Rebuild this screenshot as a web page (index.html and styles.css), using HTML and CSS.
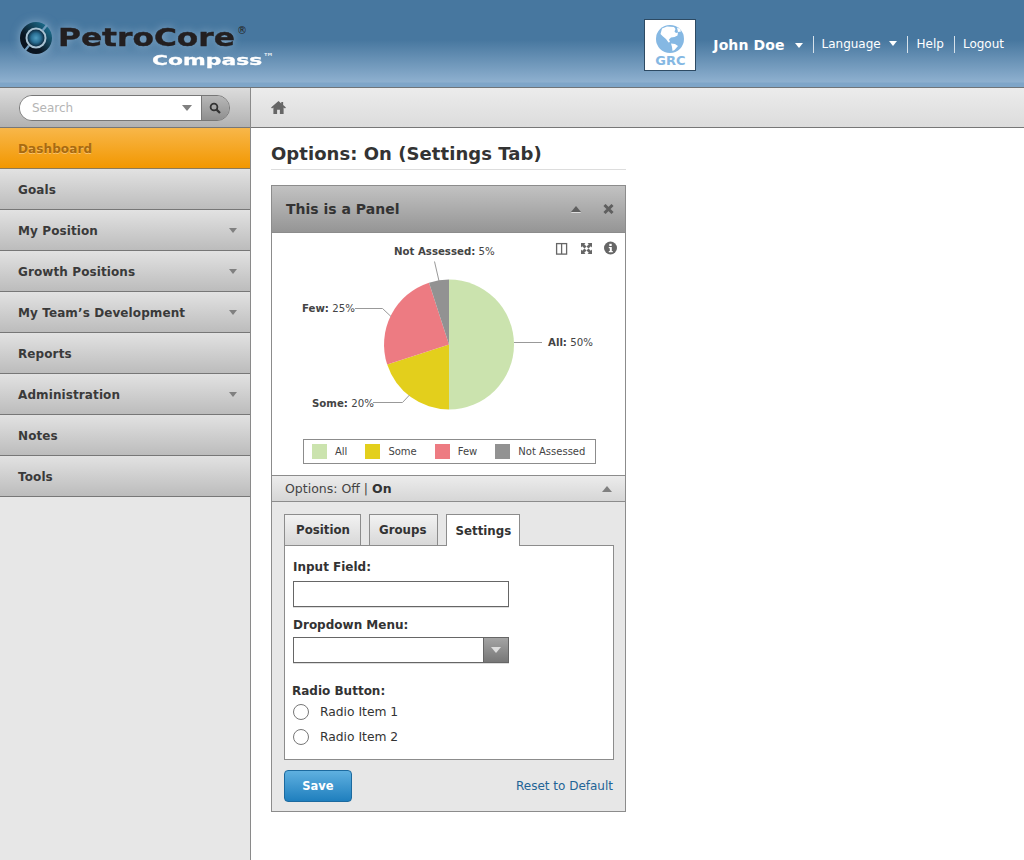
FILE: index.html
```html
<!DOCTYPE html>
<html>
<head>
    <meta charset="UTF-8">
    <meta name="viewport" content="width=device-width, initial-scale=1.0">
    <title>PetroCore Compass</title>
    <link rel="stylesheet" href="styles.css">
</head>
<body>
    <!-- Top banner -->
    <header class="banner">
        <div class="logo">
            <svg class="logo-mark" width="34" height="34" viewBox="0 0 34 34">
                <defs>
                    <linearGradient id="ringFill" x1="0" y1="1" x2="1" y2="0">
                        <stop offset="0.35" stop-color="#0a1420"/>
                        <stop offset="1" stop-color="#1f83a8"/>
                    </linearGradient>
                    <radialGradient id="coreFill">
                        <stop offset="0" stop-color="#4f9cc0"/>
                        <stop offset="0.55" stop-color="#2a6f94"/>
                        <stop offset="1" stop-color="#0c2a40"/>
                    </radialGradient>
                </defs>
                <circle cx="17" cy="17" r="16" fill="url(#ringFill)"/>
                <circle cx="17" cy="17" r="10.5" fill="#a9c2d3"/>
                <circle cx="17" cy="17" r="8.5" fill="url(#coreFill)"/>
                <path d="M23.500 9.500L28 4M10 24.500L6 29.500" stroke="#6f9abb" stroke-width="2.200"/>
            </svg>
            <div class="logo-words">
                <div class="logo-name"><span class="logo-word">PetroCore</span><span class="logo-reg">®</span></div>
                <div class="logo-sub"><span class="logo-word-sub">Compass</span><span class="logo-tm">™</span></div>
            </div>
        </div>
        <div class="user-area">
            <div class="grc-badge">
                <svg width="28" height="28" viewBox="0 0 28 28">
                    <circle cx="14" cy="14" r="14" fill="#85b8e3"/>
                    <path d="M6 3.500L11 1.500 18 2l1.500 2-1 2.500 1.500 1.500 2-.5-.5 3-3 1.500-3.500.5-2 2 1 2.500-1.500.5-2.500-3.500-3-2.500L4.500 9z" fill="#fff"/>
                    <path d="M15 18.500l4 .5 3 2-3.500 4-2 1-.5-4z" fill="#fff"/>
                    <path d="M21 2.500l3 1.500 1 2.500-3 .5z" fill="#fff"/>
                </svg>
                <span class="grc-text">GRC</span>
            </div>
            <nav class="user-links">
                <a class="user-name">John Doe <i class="caret-white"></i></a>
                <a class="user-link user-lang">Language <i class="caret-white"></i></a>
                <a class="user-link user-help">Help</a>
                <a class="user-link">Logout</a>
            </nav>
        </div>
    </header>

    <div class="page">
        <!-- Left navigation -->
        <aside class="sidebar">
            <div class="search-bar">
                <div class="search-box">
                    <div class="search-input">
                        <span>Search</span>
                        <i class="caret-grey"></i>
                    </div>
                    <div class="search-btn">
                        <svg width="12" height="12" viewBox="0 0 12 12">
                            <circle cx="5" cy="5" r="3.4" fill="none" stroke="#333" stroke-width="1.8"/>
                            <path d="M7.600 7.600L11 11" stroke="#333" stroke-width="2.200"/>
                        </svg>
                    </div>
                </div>
            </div>
            <a class="nav-item nav-active">Dashboard</a>
            <a class="nav-item">Goals</a>
            <a class="nav-item">My Position<i class="caret-grey"></i></a>
            <a class="nav-item">Growth Positions<i class="caret-grey"></i></a>
            <a class="nav-item">My Team’s Development<i class="caret-grey"></i></a>
            <a class="nav-item">Reports</a>
            <a class="nav-item">Administration<i class="caret-grey"></i></a>
            <a class="nav-item">Notes</a>
            <a class="nav-item">Tools</a>
        </aside>

        <main class="content">
            <div class="breadcrumb">
                <svg width="15" height="13" viewBox="0 0 16 14">
                    <path d="M8 0L0 7l1 1.200L2.500 7v7h4V9.500h3V14h4V7L15 8.200 16 7l-3-2.600V1h-2v1.700z" fill="#666"/>
                </svg>
            </div>
            <div class="content-body">
                <h1 class="page-title">Options: On (Settings Tab)</h1>

                <section class="panel">
                    <div class="panel-head">
                        <span>This is a Panel</span>
                        <div class="panel-tools">
                            <i class="caret-up caret-head"></i>
                            <svg width="11" height="10" viewBox="0 0 11 10">
                                <path d="M1.500 1l8 8M9.500 1l-8 8" stroke="#5f5f5f" stroke-width="3"/>
                            </svg>
                        </div>
                    </div>

                    <div class="chart-area">
                        <svg class="pie" width="353" height="200" viewBox="272 233 353 200">
                            <path d="M449 279.500A65 65 0 0 1 449 409.500Z" fill="#cbe3ae"/>
                            <path d="M449 344.500L449 409.500A65 65 0 0 1 387.200 364.600Z" fill="#e3cf1c"/>
                            <path d="M449 344.500L387.200 364.600A65 65 0 0 1 429 282.700Z" fill="#ed7b82"/>
                            <path d="M449 344.500L429 282.700A65 65 0 0 1 449 279.500Z" fill="#929292"/>
                            <g class="leaders">
                                <path d="M434.500 261.500L439 281"/>
                                <path d="M355 308.500H382.500L391 316.500"/>
                                <path d="M514 342.500H542"/>
                                <path d="M373 402.500H402.500L409.500 395"/>
                            </g>
                            <text x="394" y="255"><tspan class="pie-key">Not Assessed:</tspan> 5%</text>
                            <text x="302" y="312"><tspan class="pie-key">Few:</tspan> 25%</text>
                            <text x="548" y="346"><tspan class="pie-key">All:</tspan> 50%</text>
                            <text x="312" y="407"><tspan class="pie-key">Some:</tspan> 20%</text>
                            <!-- tool icons -->
                            <g transform="translate(556 243)">
                                <rect x="0.600" y="0.600" width="10" height="10.500" fill="none" stroke="#666" stroke-width="1.300"/>
                                <path d="M5.600 0v11" stroke="#666" stroke-width="1.300"/>
                            </g>
                            <g transform="translate(581 243)" fill="#666">
                                <path d="M0 0h4.500L3.300 1.200 5.500 3.500 3.500 5.500 1.200 3.300 0 4.500z"/>
                                <path d="M11 0v4.500L9.800 3.300 7.500 5.500 5.500 3.500 7.800 1.200 6.500 0z"/>
                                <path d="M0 11V6.500L1.200 7.700 3.500 5.500 5.500 7.500 3.300 9.800 4.500 11z"/>
                                <path d="M11 11H6.500L7.800 9.800 5.500 7.500 7.500 5.500 9.800 7.700 11 6.500z"/>
                            </g>
                            <g transform="translate(604 241.500)">
                                <circle cx="6.500" cy="6.500" r="6.500" fill="#666"/>
                                <rect x="5.300" y="2.300" width="2.400" height="2.200" fill="#fff"/>
                                <path d="M4.800 5.500h3v4h1v1.200H4.800V9.500h1V6.700h-1z" fill="#fff"/>
                            </g>
                        </svg>
                        <div class="legend">
                            <span class="legend-item"><i class="swatch swatch-all"></i>All</span>
                            <span class="legend-item"><i class="swatch swatch-some"></i>Some</span>
                            <span class="legend-item"><i class="swatch swatch-few"></i>Few</span>
                            <span class="legend-item"><i class="swatch swatch-na"></i>Not Assessed</span>
                        </div>
                    </div>

                    <div class="options-bar">
                        <span>Options: Off | <b>On</b></span>
                        <i class="caret-up"></i>
                    </div>

                    <div class="options-body">
                        <div class="tabs">
                            <a class="tab">Position</a>
                            <a class="tab">Groups</a>
                            <a class="tab tab-active">Settings</a>
                        </div>
                        <div class="tab-pane">
                            <label class="field-label">Input Field:</label>
                            <div class="text-field"></div>
                            <label class="field-label">Dropdown Menu:</label>
                            <div class="select-field">
                                <div class="select-arrow"><i class="caret-light"></i></div>
                            </div>
                            <label class="field-label radio-label">Radio Button:</label>
                            <div class="radio-row"><i class="radio"></i>Radio Item 1</div>
                            <div class="radio-row"><i class="radio"></i>Radio Item 2</div>
                        </div>
                        <div class="form-actions">
                            <button class="save-btn">Save</button>
                            <a class="reset-link">Reset to Default</a>
                        </div>
                    </div>
                </section>
            </div>
        </main>
    </div>
</body>
</html>
```

FILE: styles.css
```css
* {
    box-sizing: border-box;
}

html, body {
    height: 100%;
}

body {
    margin: 0;
    font-family: 'DejaVu Sans', Verdana, sans-serif;
    font-size: 12px;
    color: #333;
    background: #fff;
    overflow: hidden;
}

/* carets */
.caret-white, .caret-grey, .caret-light, .caret-up {
    display: inline-block;
    width: 0;
    height: 0;
    border-left: 5px solid transparent;
    border-right: 5px solid transparent;
}

.caret-white {
    border-left-width: 4px;
    border-right-width: 4px;
    border-top: 5px solid #fff;
    margin-left: 5px;
    vertical-align: 2px;
}

.user-lang .caret-white {
    margin-left: 4px;
}

.caret-grey {
    border-top: 6px solid #808080;
}

.nav-item .caret-grey {
    border-top-width: 5px;
    border-left-width: 4px;
    border-right-width: 4px;
}

.caret-light {
    border-top: 6px solid #ddd;
}

.caret-up {
    border-bottom: 6px solid #808080;
}

.caret-head {
    border-bottom-color: #5f5f5f;
    filter: drop-shadow(0 1px 0 #ddd);
}

/* banner */
.banner {
    height: 88px;
    display: flex;
    justify-content: space-between;
    background: linear-gradient(#47779f 0, #47779f 40px, #8eb0cf 82px, #7ea5c8 83px, #7ea5c8 87px);
    border-bottom: 1px solid #6f7478;
}

.logo {
    display: flex;
    padding: 21px 0 0 19px;
}

.logo-mark {
    flex: none;
    filter: drop-shadow(0 0 5px rgba(190, 215, 235, 0.55));
}

.logo-words {
    margin-left: 5px;
    font-weight: bold;
}

.logo-name {
    display: flex;
    font-size: 25px;
    line-height: 33px;
    color: #231f20;
}

.logo-word {
    display: block;
    width: 176px;
    transform: scaleX(1.25);
    transform-origin: left center;
    -webkit-text-stroke: 0.4px #231f20;
    text-shadow: 0 0 8px rgba(190, 215, 235, 0.6);
}

.logo-reg {
    font-size: 10px;
    line-height: 12px;
    font-weight: normal;
    margin: 4px 0 0 3px;
}

.logo-sub {
    display: flex;
    font-size: 14px;
    line-height: 14px;
    color: #fff;
    margin: -1px 0 0 94px;
}

.logo-word-sub {
    display: block;
    width: 110px;
    transform: scaleX(1.56);
    transform-origin: left center;
    -webkit-text-stroke: 0.3px #fff;
}

.logo-tm {
    font-size: 11px;
    line-height: 10px;
    margin-left: 1px;
    color: #dde6ee;
}

.user-area {
    display: flex;
    align-items: flex-start;
    padding: 19px 20px 0 0;
}

.grc-badge {
    width: 52px;
    height: 52px;
    background: #fff;
    border: 1px solid #2d4a63;
    display: flex;
    flex-direction: column;
    align-items: center;
    padding-top: 5px;
    margin-right: 17px;
}

.grc-text {
    font-size: 13px;
    line-height: 15px;
    font-weight: bold;
    color: #85b8e3;
}

.user-links {
    display: flex;
    align-items: center;
    height: 17px;
    margin-top: 17px;
    color: #fff;
}

.user-name {
    font-size: 14px;
    font-weight: bold;
    letter-spacing: 0.1px;
    padding-right: 10px;
}

.user-link {
    font-size: 12px;
    border-left: 1px solid #d6e1ea;
    padding: 0 9px 0 8px;
    line-height: 17px;
}

.user-lang {
    padding-right: 10px;
}

.user-help {
    padding: 0 10px 0 9px;
}

.user-link:last-child {
    padding-right: 0;
}

/* page */
.page {
    display: flex;
    height: 772px;
}

.sidebar {
    width: 251px;
    flex: none;
    background: #e7e7e7;
    border-right: 1px solid #8a8a8a;
}

.search-bar {
    height: 40px;
    padding: 7px 20px 0 19px;
    background: linear-gradient(#dcdcdc, #b2b2b2);
    border-bottom: 1px solid #777;
}

.search-box {
    display: flex;
    height: 26px;
    border: 1px solid #777;
    border-radius: 13px;
    overflow: hidden;
}

.search-input {
    flex: 1;
    background: #fff;
    display: flex;
    align-items: center;
    justify-content: space-between;
    padding: 0 9px 0 12px;
    color: #b5b5b5;
    font-size: 12px;
}

.search-btn {
    width: 28px;
    background: linear-gradient(#b8b8b8, #8f8f8f);
    border-left: 1px solid #777;
    display: flex;
    align-items: center;
    justify-content: center;
    padding-right: 2px;
}

.nav-item {
    display: flex;
    align-items: center;
    justify-content: space-between;
    height: 41px;
    padding: 1px 13px 0 18px;
    font-size: 12px;
    font-weight: bold;
    color: #3a3a3a;
    background: linear-gradient(#e2e2e2, #bcbcbc);
    border-bottom: 1px solid #777;
    letter-spacing: 0.1px;
}

.nav-active {
    background: linear-gradient(#f8b74a, #f29700);
    color: #a86a10;
    border-bottom-color: #8b7a5c;
    text-shadow: 0 1px 0 rgba(255, 255, 255, 0.35);
}

/* content */
.content {
    flex: 1;
}

.breadcrumb {
    height: 40px;
    padding: 13px 0 0 20px;
    background: linear-gradient(#ececec, #dcdcdc);
    border-bottom: 1px solid #777;
}

.content-body {
    width: 375px;
    padding-left: 20px;
}

.page-title {
    margin: 0 0 15px;
    height: 42px;
    font-size: 18px;
    line-height: 51px;
    font-weight: bold;
    color: #333;
    border-bottom: 1px solid #ddd;
    letter-spacing: 0.05px;
}

.panel {
    border: 1px solid #8c8c8c;
    background: #fff;
}

.panel-head {
    height: 47px;
    display: flex;
    align-items: center;
    justify-content: space-between;
    padding: 0 11px 0 14px;
    background: linear-gradient(#c2c2c2, #959595);
    border-bottom: 1px solid #8c8c8c;
    font-size: 14px;
    font-weight: bold;
}

.panel-tools {
    display: flex;
    align-items: center;
    gap: 22px;
}

.chart-area {
    height: 243px;
    border-bottom: 1px solid #8c8c8c;
}

.pie {
    display: block;
}

.pie text {
    font-size: 10.2px;
    fill: #444;
}

.pie .pie-key {
    font-weight: bold;
}

.leaders path {
    fill: none;
    stroke: #999;
    stroke-width: 1;
}

.legend {
    display: flex;
    align-items: center;
    height: 25px;
    width: 293px;
    margin: 6px 0 0 31px;
    padding-left: 8px;
    border: 1px solid #8c8c8c;
    font-size: 10px;
    color: #444;
}

.legend-item {
    display: flex;
    align-items: center;
}

.legend-item + .legend-item {
    margin-left: 18px;
}

.swatch {
    width: 15px;
    height: 15px;
    margin-right: 8px;
}

.swatch-all { background: #cbe3ae; }
.swatch-some { background: #e3cf1c; }
.swatch-few { background: #ed7b82; }
.swatch-na { background: #929292; }

.options-bar {
    height: 26px;
    display: flex;
    align-items: center;
    justify-content: space-between;
    padding: 0 13px;
    background: linear-gradient(#ececec, #d6d6d6);
    border-bottom: 1px solid #8c8c8c;
    font-size: 12.5px;
    color: #444;
}

.options-bar b {
    color: #333;
}

.options-body {
    background: #e7e7e7;
    padding: 12px 11px 0 12px;
    height: 309px;
}

.tabs {
    display: flex;
    gap: 8px;
    margin-bottom: -1px;
}

.tab {
    height: 31px;
    padding: 0 10px 0 9px;
    display: flex;
    align-items: center;
    font-size: 11.8px;
    font-weight: bold;
    background: linear-gradient(#f2f2f2, #d8d8d8);
    border: 1px solid #8c8c8c;
    border-bottom: 0;
}

.tab:first-child {
    padding-left: 11px;
}

.tab-active {
    height: 32px;
    padding-right: 8px;
    background: #fff;
    position: relative;
}

.tab-pane {
    height: 215px;
    padding: 12px 8px 0;
    background: #fff;
    border: 1px solid #8c8c8c;
}

.field-label {
    display: block;
    font-size: 12px;
    line-height: 19px;
    font-weight: bold;
}

.text-field, .select-field {
    width: 216px;
    height: 26px;
    margin: 4px 0 9px;
    border: 1px solid #666;
    box-shadow: 0 1px 0 #ddd;
}

.select-field {
    display: flex;
    justify-content: flex-end;
    margin: 2px 0 9px;
}

.select-arrow {
    width: 25px;
    background: linear-gradient(#a4a4a4, #777);
    border-left: 1px solid #666;
    display: flex;
    align-items: center;
    justify-content: center;
}

.radio-label {
    margin: 19px 0 -2px -1px;
}

.radio-row {
    display: flex;
    align-items: center;
    height: 25px;
    font-size: 12.3px;
}

.radio {
    width: 16px;
    height: 16px;
    margin-right: 11px;
    border: 1px solid #777;
    border-radius: 50%;
    background: #fff;
}

.form-actions {
    display: flex;
    align-items: center;
    justify-content: space-between;
    margin-top: 10px;
}

.save-btn {
    width: 68px;
    height: 32px;
    padding: 0;
    font-family: inherit;
    font-size: 11.5px;
    font-weight: bold;
    color: #fff;
    background: linear-gradient(#5fb0e0, #1f7fbe);
    border: 1px solid #1c6a9f;
    border-radius: 4px;
}

.reset-link {
    font-size: 12px;
    padding-right: 1px;
    color: #1f6496;
}
```
